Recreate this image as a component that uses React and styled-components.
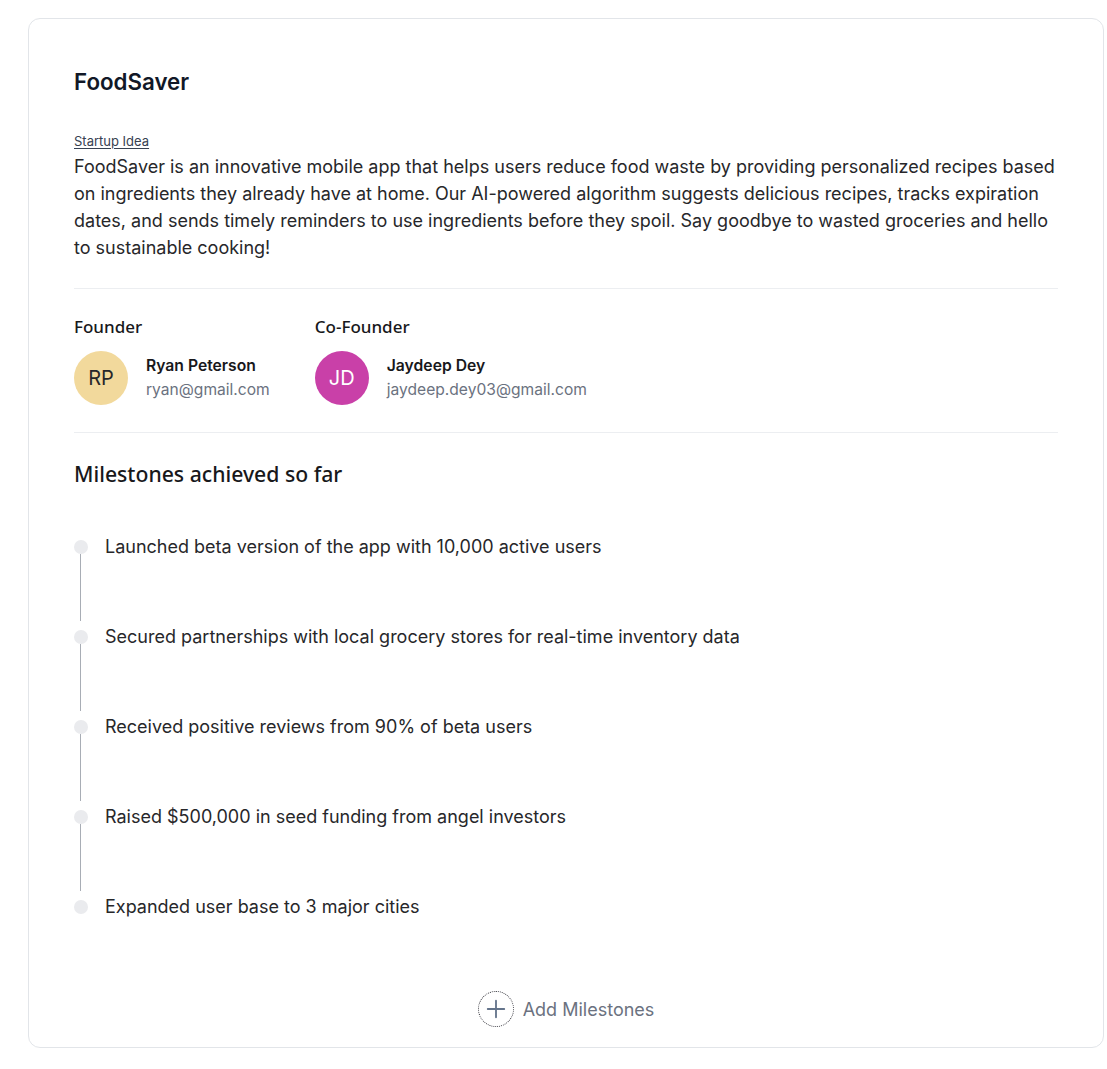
import React from "react";
import styled, { createGlobalStyle } from "styled-components";

const Global = createGlobalStyle`
  html, body { margin: 0; padding: 0; background: #ffffff; }
  body {
    padding: 18px 3px 20px 28px;
    font-family: Inter, "Liberation Sans", sans-serif;
    color: #27272a;
    -webkit-font-smoothing: antialiased;
  }
  * { box-sizing: border-box; }
`;

const Card = styled.section`
  border: 1px solid #e2e5e9;
  border-radius: 12px;
  background: #fff;
  padding: 50px 45px 20px 45px;
`;

const Title = styled.h1`
  margin: 0;
  font-family: Inter, sans-serif;
  font-size: 22.3px;
  line-height: 26px;
  font-weight: 600;
  color: #111827;
`;

const Label = styled.a`
  display: block;
  margin-top: 37px;
  font-size: 13px;
  line-height: 18px;
  color: #374151;
  text-decoration: underline;
  text-underline-offset: 2px;
`;

const Description = styled.p`
  margin: 3px 0 0;
  font-size: 18px;
  line-height: 27px;
  color: #27272a;
`;

const Divider = styled.hr`
  border: 0;
  border-top: 1px solid #eceef1;
  margin: ${(p) => p.$top}px 0 0;
`;

const People = styled.div`
  display: flex;
  gap: 45px;
  margin-top: 27px;
`;

const Person = styled.div`
  display: flex;
  flex-direction: column;
`;

const Role = styled.h3`
  margin: 0;
  font-family: "Noto Sans", "Open Sans", sans-serif;
  font-size: 17px;
  line-height: 22px;
  font-weight: 500;
  color: #18181b;
`;

const PersonRow = styled.div`
  display: flex;
  align-items: center;
  gap: 18px;
  margin-top: 13px;
`;

const Avatar = styled.div`
  width: 54px;
  height: 54px;
  border-radius: 50%;
  display: flex;
  align-items: center;
  justify-content: center;
  background: ${(p) => p.$bg};
  color: ${(p) => p.$fg};
  font-size: 20px;
  font-family: Inter, sans-serif;
`;

const PersonInfo = styled.div`
  display: flex;
  flex-direction: column;
  gap: 6px;
`;

const Name = styled.span`
  font-size: 15.7px;
  line-height: 18px;
  font-weight: 600;
  color: #18181b;
`;

const Email = styled.span`
  font-size: 15.6px;
  line-height: 18px;
  color: #6b7280;
`;

const SectionTitle = styled.h2`
  margin: 27px 0 0;
  font-family: "Noto Sans", "Open Sans", sans-serif;
  font-size: 21.2px;
  line-height: 28px;
  font-weight: 500;
  color: #18181b;
`;

const Timeline = styled.ul`
  list-style: none;
  margin: 52px 0 0;
  padding: 0;
  display: flex;
  flex-direction: column;
  gap: 9px;
`;

const Item = styled.li`
  display: flex;
  gap: 17px;
`;

const Rail = styled.div`
  display: flex;
  flex-direction: column;
  width: 14px;
  flex: none;
`;

const Dot = styled.span`
  width: 14px;
  height: 14px;
  border-radius: 50%;
  background: #eaebee;
`;

const Line = styled.span`
  width: 1px;
  height: 67px;
  margin-left: 6px;
  background: #a8adb5;
`;

const ItemText = styled.span`
  font-size: 18px;
  line-height: 14px;
  color: #27272a;
`;

const AddRow = styled.div`
  display: flex;
  justify-content: center;
  margin-top: 77px;
`;

const AddButton = styled.button`
  display: flex;
  align-items: center;
  gap: 9px;
  border: 0;
  background: none;
  padding: 0;
  cursor: pointer;
  font-family: Inter, sans-serif;
  font-size: 18px;
  color: #6b7280;
`;

const PlusCircle = styled.span`
  width: 36px;
  height: 36px;
  border-radius: 50%;
  border: 1px dotted #3f3f46;
  display: flex;
  align-items: center;
  justify-content: center;
`;

const milestones = [
  "Launched beta version of the app with 10,000 active users",
  "Secured partnerships with local grocery stores for real-time inventory data",
  "Received positive reviews from 90% of beta users",
  "Raised $500,000 in seed funding from angel investors",
  "Expanded user base to 3 major cities",
];

const people = [
  { role: "Founder", initials: "RP", name: "Ryan Peterson", email: "ryan@gmail.com", bg: "#f2d99c", fg: "#27272a" },
  { role: "Co-Founder", initials: "JD", name: "Jaydeep Dey", email: "jaydeep.dey03@gmail.com", bg: "#c940a8", fg: "#ffffff" },
];

export default function App() {
  return (
    <>
      <Global />
      <Card>
        <Title>FoodSaver</Title>
        <Label>Startup Idea</Label>
        <Description>
          FoodSaver is an innovative mobile app that helps users reduce food waste by providing personalized recipes based
          on ingredients they already have at home. Our AI-powered algorithm suggests delicious recipes, tracks expiration
          dates, and sends timely reminders to use ingredients before they spoil. Say goodbye to wasted groceries and hello
          to sustainable cooking!
        </Description>
        <Divider $top={27} />
        <People>
          {people.map((p) => (
            <Person key={p.role}>
              <Role>{p.role}</Role>
              <PersonRow>
                <Avatar $bg={p.bg} $fg={p.fg}>{p.initials}</Avatar>
                <PersonInfo>
                  <Name>{p.name}</Name>
                  <Email>{p.email}</Email>
                </PersonInfo>
              </PersonRow>
            </Person>
          ))}
        </People>
        <Divider $top={27} />
        <SectionTitle>Milestones achieved so far</SectionTitle>
        <Timeline>
          {milestones.map((m, i) => (
            <Item key={m}>
              <Rail>
                <Dot />
                {i < milestones.length - 1 && <Line />}
              </Rail>
              <ItemText>{m}</ItemText>
            </Item>
          ))}
        </Timeline>
        <AddRow>
          <AddButton>
            <PlusCircle>
              <svg width="22" height="22" viewBox="0 0 24 24" fill="none" stroke="#64748b" strokeWidth="2" strokeLinecap="round">
                <path d="M12 3v18M3 12h18" />
              </svg>
            </PlusCircle>
            Add Milestones
          </AddButton>
        </AddRow>
      </Card>
    </>
  );
}
